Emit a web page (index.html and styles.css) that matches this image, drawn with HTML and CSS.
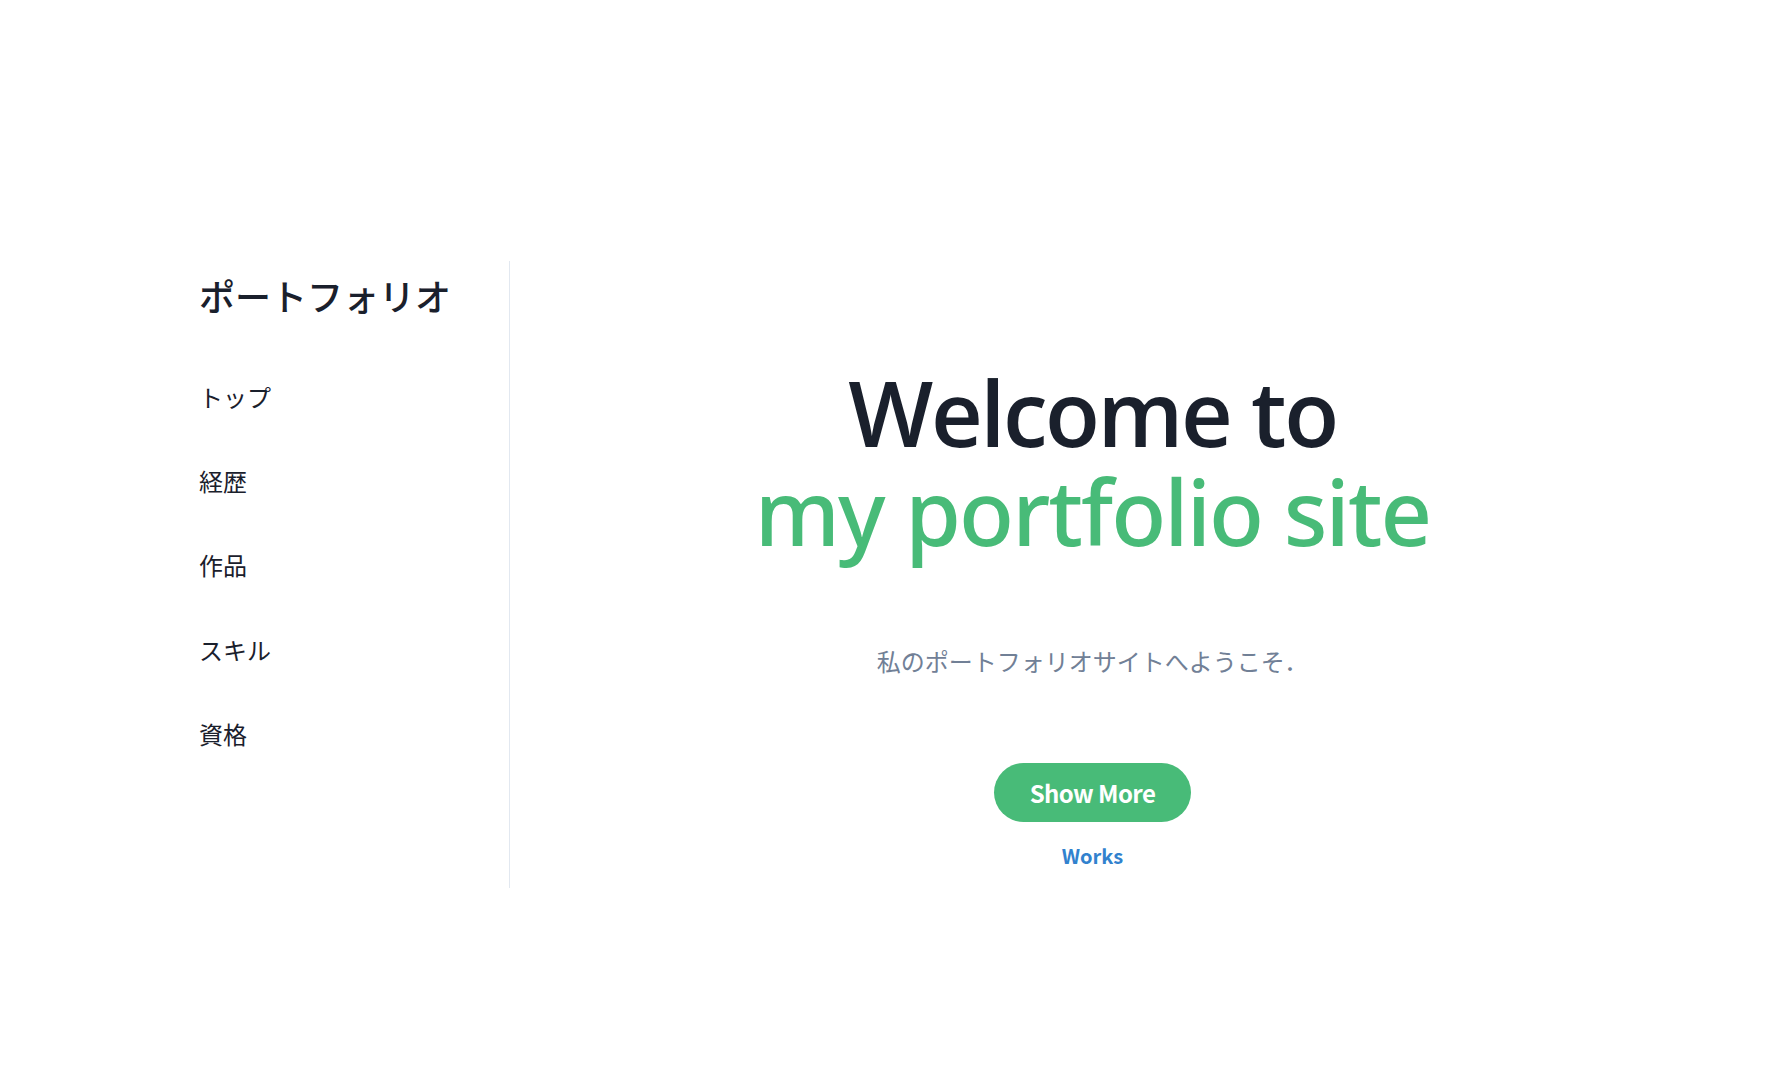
FILE: index.html
```html
<!DOCTYPE html>
<html lang="ja">
<head>
<meta charset="utf-8">
<title>ポートフォリオ</title>
<link rel="stylesheet" href="styles.css">
</head>
<body>
<div class="page">
  <aside class="sidebar">
    <h2 class="brand">ポートフォリオ</h2>
    <nav class="nav">
      <a class="nav-item" href="#top">トップ</a>
      <a class="nav-item" href="#career">経歴</a>
      <a class="nav-item" href="#works">作品</a>
      <a class="nav-item" href="#skills">スキル</a>
      <a class="nav-item" href="#license">資格</a>
    </nav>
  </aside>
  <main class="main">
    <h1 class="hero-title">
      <span class="hero-line1">Welcome to</span>
      <span class="hero-line2">my portfolio site</span>
    </h1>
    <p class="hero-sub">私のポートフォリオサイトへようこそ．</p>
    <a class="btn" href="#works">Show More</a>
    <a class="works-link" href="#works">Works</a>
  </main>
</div>
</body>
</html>
```
FILE: styles.css
```css
html, body {
  margin: 0;
  padding: 0;
  background: #ffffff;
}
body {
  font-family: "Noto Sans CJK JP", "Noto Sans", sans-serif;
  color: #1a202c;
}
.page {
  display: flex;
  padding: 261px 94px 0 185px;
}
.sidebar {
  width: 325px;
  box-sizing: border-box;
  height: 627px;
  padding: 14px 16px 0 14px;
  border-right: 1px solid #e2e8f0;
}
.brand {
  margin: 0;
  font-size: 36px;
  line-height: 40px;
  font-weight: 500;
  color: #1a202c;
}
.nav {
  display: flex;
  flex-direction: column;
  gap: 52.2px;
  margin-top: 66px;
}
.nav-item {
  font-size: 24px;
  line-height: 32px;
  color: #1a202c;
  text-decoration: none;
}
.main {
  flex: 1;
  display: flex;
  flex-direction: column;
  align-items: center;
  padding-top: 102px;
}
.hero-title {
  margin: 0;
  font-family: "Open Sans", sans-serif;
  font-size: 90px;
  line-height: 99px;
  text-align: center;
}
.hero-line1 {
  display: block;
  font-weight: 600;
  letter-spacing: -2.5px;
  color: #1a202c;
}
.hero-line2 {
  display: block;
  font-family: "Noto Sans", "Open Sans", sans-serif;
  font-weight: 500;
  letter-spacing: -1.9px;
  color: #48bb78;
}
.hero-sub {
  margin: 84px 0 0 0;
  font-size: 24px;
  line-height: 32px;
  color: #718096;
}
.btn {
  margin-top: 86px;
  height: 59px;
  padding: 0 36px;
  display: flex;
  align-items: center;
  border-radius: 9999px;
  background: #48bb78;
  color: #ffffff;
  font-size: 24px;
  font-weight: 700;
  letter-spacing: -0.6px;
  text-decoration: none;
}
.works-link {
  margin-top: 20px;
  font-size: 20px;
  line-height: 28px;
  font-weight: 700;
  color: #3182ce;
  text-decoration: none;
}
```
